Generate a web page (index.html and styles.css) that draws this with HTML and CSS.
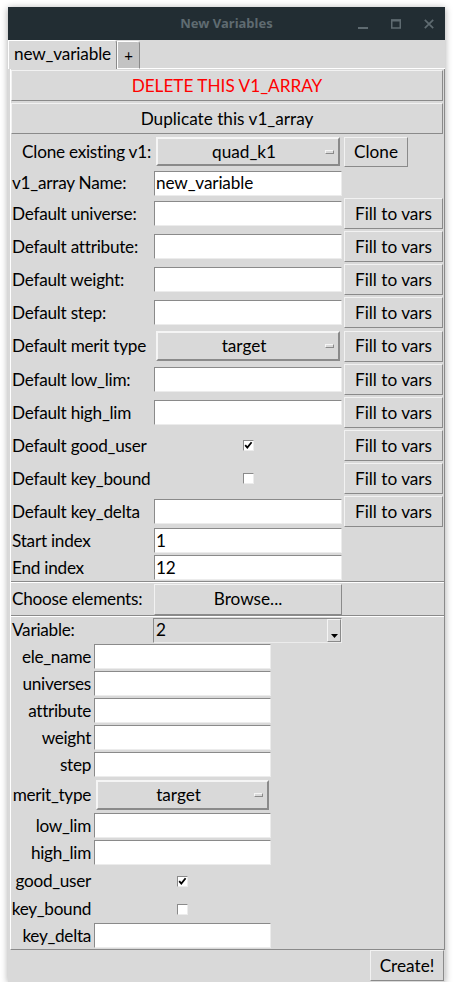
FILE: index.html
```html
<!DOCTYPE html>
<html>
<head>
<meta charset="utf-8">
<link rel="stylesheet" href="styles.css">
</head>
<body>
<div class="window">
  <div class="titlebar">
    <div class="tb-side"></div>
    <div class="title">New Variables</div>
    <div class="controls">
      <span class="ctl"><svg width="10" height="10" viewBox="0 0 10 10"><rect x="0" y="8" width="10" height="2" fill="#5f6b71"/></svg></span>
      <span class="ctl"><svg width="10" height="10" viewBox="0 0 10 10"><rect x="0.75" y="1" width="8.5" height="8" fill="none" stroke="#5f6b71" stroke-width="1.5"/><rect x="0" y="0.5" width="10" height="2" fill="#5f6b71"/></svg></span>
      <span class="ctl"><svg width="10" height="10" viewBox="0 0 10 10"><path d="M0.8 0.8 L9.2 9.2 M9.2 0.8 L0.8 9.2" stroke="#5f6b71" stroke-width="1.7"/></svg></span>
    </div>
  </div>
  <div class="tabs">
    <div class="tab active">new_variable</div>
    <div class="tab plus">+</div>
    <div class="tab-fill"></div>
  </div>
  <div class="pane">
    <button class="btn full delete">DELETE THIS V1_ARRAY</button>
    <button class="btn full dup">Duplicate this v1_array</button>

    <div class="frow r-clone">
      <div class="lbl right">Clone existing v1:</div>
      <div class="mbtn"><span class="mtext">quad_k1</span><span class="ind"></span></div>
      <button class="btn clone">Clone</button>
    </div>
    <div class="frow r-name">
      <div class="lbl">v1_array Name:</div>
      <div class="entry">new_variable</div>
      <div></div>
    </div>
    <div class="frow r-fill">
      <div class="lbl">Default universe:</div>
      <div class="entry"></div>
      <button class="btn fill">Fill to vars</button>
    </div>
    <div class="frow r-fill">
      <div class="lbl">Default attribute:</div>
      <div class="entry"></div>
      <button class="btn fill">Fill to vars</button>
    </div>
    <div class="frow r-fill">
      <div class="lbl">Default weight:</div>
      <div class="entry"></div>
      <button class="btn fill">Fill to vars</button>
    </div>
    <div class="frow r-fill">
      <div class="lbl">Default step:</div>
      <div class="entry"></div>
      <button class="btn fill">Fill to vars</button>
    </div>
    <div class="frow r-merit">
      <div class="lbl">Default merit type</div>
      <div class="mbtn"><span class="mtext">target</span><span class="ind"></span></div>
      <button class="btn fill">Fill to vars</button>
    </div>
    <div class="frow r-fill">
      <div class="lbl">Default low_lim:</div>
      <div class="entry"></div>
      <button class="btn fill">Fill to vars</button>
    </div>
    <div class="frow r-fill">
      <div class="lbl">Default high_lim</div>
      <div class="entry"></div>
      <button class="btn fill">Fill to vars</button>
    </div>
    <div class="frow r-fill">
      <div class="lbl">Default good_user</div>
      <span class="cb"><svg width="9" height="9" viewBox="0 0 9 9"><path d="M1.2 4.2 L3.3 6.6 L7.6 1.2" fill="none" stroke="#000" stroke-width="1.8"/></svg></span>
      <button class="btn fill">Fill to vars</button>
    </div>
    <div class="frow r-fill">
      <div class="lbl">Default key_bound</div>
      <span class="cb"></span>
      <button class="btn fill">Fill to vars</button>
    </div>
    <div class="frow r-fill">
      <div class="lbl">Default key_delta</div>
      <div class="entry"></div>
      <button class="btn fill">Fill to vars</button>
    </div>
    <div class="frow r-idx">
      <div class="lbl idx">Start index</div>
      <div class="entry">1</div>
      <div></div>
    </div>
    <div class="frow r-idx r-end">
      <div class="lbl idx">End index</div>
      <div class="entry">12</div>
      <div></div>
    </div>
    <div class="sep"></div>
    <div class="frow r-choose">
      <div class="lbl">Choose elements:</div>
      <button class="btn browse">Browse...</button>
      <div></div>
    </div>
    <div class="sep"></div>
    <div class="frow r-var">
      <div class="lbl">Variable:</div>
      <div class="combo"><span class="ctext">2</span><span class="carrow"><svg width="7" height="4" viewBox="0 0 7 4"><path d="M0 0 H7 L3.5 4 Z" fill="#000"/></svg></span></div>
      <div></div>
    </div>

    <div class="sub">
      <div class="srow"><div class="slbl">ele_name</div><div class="entry"></div></div>
      <div class="srow"><div class="slbl">universes</div><div class="entry"></div></div>
      <div class="srow"><div class="slbl">attribute</div><div class="entry"></div></div>
      <div class="srow"><div class="slbl">weight</div><div class="entry"></div></div>
      <div class="srow"><div class="slbl">step</div><div class="entry"></div></div>
      <div class="srow s-merit"><div class="slbl">merit_type</div><div class="mbtn"><span class="mtext">target</span><span class="ind"></span></div></div>
      <div class="srow"><div class="slbl">low_lim</div><div class="entry"></div></div>
      <div class="srow"><div class="slbl">high_lim</div><div class="entry"></div></div>
      <div class="srow s-good"><div class="slbl">good_user</div><span class="cb"><svg width="9" height="9" viewBox="0 0 9 9"><path d="M1.2 4.2 L3.3 6.6 L7.6 1.2" fill="none" stroke="#000" stroke-width="1.8"/></svg></span></div>
      <div class="srow s-key"><div class="slbl">key_bound</div><span class="cb"></span></div>
      <div class="srow"><div class="slbl">key_delta</div><div class="entry"></div></div>
    </div>
  </div>
  <div class="footer">
    <button class="btn create">Create!</button>
  </div>
</div>
</body>
</html>
```

FILE: styles.css
```css
* { box-sizing: border-box; }
html, body { margin: 0; padding: 0; background: #ffffff; }
body {
  font-family: Lato, "DejaVu Sans", sans-serif;
  font-size: 17.2px;
  color: #000;
}
.window {
  margin: 7px 0 0 8px;
  width: 437px;
  height: 975px;
  background: #d9d9d9;
  box-shadow: 0 1px 7px rgba(0,0,0,0.35);
  display: flex;
  flex-direction: column;
}
.titlebar {
  height: 33px;
  background: #222d33;
  display: grid;
  grid-template-columns: 1fr auto 1fr;
  align-items: center;
}
.title {
  font-family: "Noto Sans", "DejaVu Sans", sans-serif;
  font-weight: bold;
  font-size: 13px;
  color: #5f6b71;
  padding-bottom: 2px;
}
.controls {
  justify-self: end;
  display: flex;
  height: 33px;
}
.ctl {
  width: 33px;
  height: 33px;
  display: flex;
  align-items: center;
  justify-content: center;
  padding-top: 1px;
}
.ctl svg { display: block; }

.tabs {
  height: 29px;
  display: flex;
  align-items: flex-end;
}
.tab {
  display: flex;
  align-items: center;
  justify-content: center;
  line-height: 1;
}
.tab.active {
  width: 109px;
  height: 29px;
  border-left: 1px solid #ffffff;
  border-top: 1px solid #ffffff;
  border-right: 1px solid #8a8a8a;
  border-top-right-radius: 3px;
  padding-bottom: 2px;
  letter-spacing: -0.15px;
}
.tab.plus {
  width: 23px;
  height: 28px;
  background: #c3c3c3;
  border-left: 1px solid #ffffff;
  border-top: 1px solid #ffffff;
  border-right: 1px solid #8a8a8a;
  border-bottom: 1px solid #ffffff;
  border-top-right-radius: 3px;
  font-size: 15px;
}
.tab-fill {
  flex: 1;
  height: 1px;
  border-bottom: 1px solid #ffffff;
}

.pane {
  margin-left: 2px;
  width: 435px;
  height: 881px;
  border-left: 1px solid #ffffff;
  border-right: 1px solid #8a8a8a;
  border-bottom: 1px solid #8a8a8a;
  display: flex;
  flex-direction: column;
}

.btn {
  font: inherit;
  color: #000;
  background: #d9d9d9;
  border: 1px solid;
  border-color: #f2f2f2 #8a8a8a #8a8a8a #f2f2f2;
  padding: 0;
  margin: 0;
  display: flex;
  align-items: center;
  justify-content: center;
  line-height: 1;
}
.btn.full {
  width: 432px;
  height: 31px;
}
.btn.delete { margin-top: 1px; color: #ff0000; }
.btn.dup { margin-top: 2px; }

.frow {
  display: grid;
  grid-template-columns: 141px 188px 99px;
  column-gap: 2px;
  align-items: center;
}
.r-clone { height: 35px; }
.r-name { height: 28px; }
.r-fill { height: 33px; }
.r-merit { height: 34px; }
.r-idx { height: 27px; align-items: start; }
.r-end { height: 26px; }
.r-choose { height: 32px; }
.r-var { height: 26px; }

.lbl {
  padding-left: 1px;
  white-space: nowrap;
  line-height: 1;
  letter-spacing: -0.25px;
}
.lbl.right { justify-self: end; padding-right: 1px; }
.lbl.idx {
  height: 25px;
  display: flex;
  align-items: center;
}

.entry {
  height: 25px;
  background: #ffffff;
  border: 1px solid;
  border-color: #8a8a8a #ececec #ececec #8a8a8a;
  padding-left: 1px;
  display: flex;
  align-items: center;
  line-height: 1;
  white-space: nowrap;
  letter-spacing: -0.15px;
}

.mbtn {
  margin: 0 2px;
  height: 29px;
  border: 2px solid;
  border-color: #f5f5f5 #8a8a8a #8a8a8a #f5f5f5;
  position: relative;
  display: flex;
  align-items: center;
  justify-content: center;
  line-height: 1;
}
.mtext { margin-right: 8px; }
.ind {
  position: absolute;
  right: 4px;
  top: 50%;
  margin-top: -2px;
  width: 9px;
  height: 4px;
  border: 1px solid;
  border-color: #f5f5f5 #8a8a8a #8a8a8a #f5f5f5;
}
.r-merit .mbtn { height: 30px; }

.btn.clone { width: 64px; height: 30px; }
.btn.fill { width: 99px; height: 31px; }
.btn.browse { width: 188px; height: 31px; }

.cb {
  justify-self: center;
  width: 11px;
  height: 11px;
  background: #ffffff;
  border: 1px solid;
  border-color: #8a8a8a #ececec #ececec #8a8a8a;
  display: flex;
  align-items: center;
  justify-content: center;
}
.cb svg { display: block; }

.sep {
  height: 2px;
  border-top: 1px solid #8a8a8a;
  border-bottom: 1px solid #ffffff;
}

.combo {
  margin-left: -1px;
  height: 25px;
  border: 1px solid;
  border-color: #8a8a8a #ececec #ececec #8a8a8a;
  display: flex;
  align-items: stretch;
  line-height: 1;
}
.ctext {
  flex: 1;
  display: flex;
  align-items: center;
  padding-left: 2px;
}
.carrow {
  width: 14px;
  border: 1px solid;
  border-color: #f5f5f5 #8a8a8a #8a8a8a #f5f5f5;
  display: flex;
  align-items: flex-end;
  justify-content: center;
  padding-bottom: 3px;
}
.carrow svg { display: block; }

.sub {
  display: flex;
  flex-direction: column;
}
.srow {
  height: 27px;
  display: grid;
  grid-template-columns: 81px 177px;
  column-gap: 2px;
  align-items: center;
}
.s-merit { height: 34px; }
.s-good { height: 30px; }
.s-key { height: 26px; }
.slbl {
  justify-self: end;
  padding-right: 1px;
  white-space: nowrap;
  line-height: 1;
  letter-spacing: -0.3px;
}
.srow .mbtn { height: 30px; }

.footer {
  height: 33px;
  display: flex;
  justify-content: flex-end;
  align-items: flex-start;
}
.btn.create {
  width: 74px;
  height: 31px;
  margin-right: 1px;
}
```
